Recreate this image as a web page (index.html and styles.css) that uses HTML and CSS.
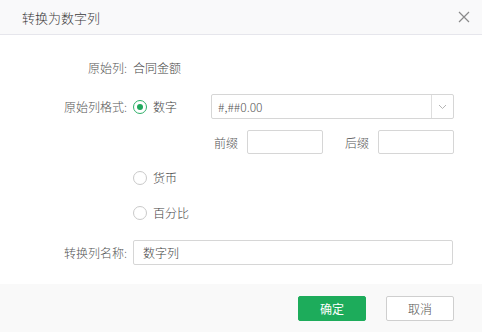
FILE: index.html
```html
<!DOCTYPE html>
<html lang="zh">
<head>
<meta charset="utf-8">
<title>转换为数字列</title>
<link rel="stylesheet" href="styles.css">
</head>
<body>
<div class="dialog">
  <div class="header">
    <span class="title">转换为数字列</span>
    <svg class="close" width="12" height="12" viewBox="0 0 12 12"><path d="M1 1L11 11M11 1L1 11" stroke="#8a8a8a" stroke-width="1.2" fill="none"/></svg>
  </div>
  <div class="body">
    <div class="row r1">
      <div class="label">原始列:</div>
      <div class="value">合同金额</div>
    </div>
    <div class="row r2">
      <div class="label">原始列格式:</div>
      <div class="opts">
        <div class="opt-line">
          <div class="radio-item"><span class="radio checked"></span><span>数字</span></div>
          <div class="select">
            <span class="select-text">#,##0.00</span>
            <span class="select-arrow"><svg width="9" height="6" viewBox="0 0 9 6"><path d="M1 1L4.5 4.5L8 1" stroke="#b5b5b5" stroke-width="1" fill="none"/></svg></span>
          </div>
        </div>
        <div class="affix-line">
          <span class="affix-label">前缀</span>
          <span class="input small"></span>
          <span class="affix-label second">后缀</span>
          <span class="input small"></span>
        </div>
        <div class="radio-item solo r-cur"><span class="radio"></span><span>货币</span></div>
        <div class="radio-item solo r-pct"><span class="radio"></span><span>百分比</span></div>
      </div>
    </div>
    <div class="row r3">
      <div class="label">转换列名称:</div>
      <div class="input wide"><span>数字列</span></div>
    </div>
  </div>
  <div class="footer">
    <button class="btn primary">确定</button>
    <button class="btn">取消</button>
  </div>
</div>
</body>
</html>
```
FILE: styles.css
```css
* { box-sizing: border-box; }
html, body { margin: 0; padding: 0; }
body {
  width: 482px;
  height: 332px;
  background: #fff;
  font-family: "Noto Sans CJK SC", "Noto Sans", "Liberation Sans", sans-serif;
  font-size: 12px;
  font-weight: 300;
  color: #444;
  overflow: hidden;
}
.dialog {
  width: 482px;
  height: 332px;
  display: flex;
  flex-direction: column;
}
.header {
  height: 35px;
  flex: none;
  background: #f9f9fa;
  border-bottom: 1px solid #e6e6ec;
  display: flex;
  align-items: center;
  justify-content: space-between;
  padding: 0 12px 0 22px;
}
.title {
  font-size: 13px;
  color: #3a3a3a;
  line-height: 1;
}
.close { display: block; }
.body {
  flex: 1;
  padding: 20px 29px 0 0;
}
.row {
  display: grid;
  grid-template-columns: 127px 1fr;
  column-gap: 6px;
  align-items: start;
}
.label {
  text-align: right;
  color: #555;
  height: 25px;
  line-height: 25px;
}
.value {
  height: 25px;
  line-height: 25px;
  color: #444;
}
.r2 { margin-top: 14px; }
.opts {
  display: flex;
  flex-direction: column;
}
.opt-line {
  display: flex;
  height: 25px;
}
.radio-item {
  display: flex;
  align-items: center;
  height: 25px;
  width: 78px;
  flex: none;
  color: #444;
}
.radio {
  width: 14px;
  height: 14px;
  border: 1px solid #c9c9c9;
  border-radius: 50%;
  margin-right: 6px;
  flex: none;
  display: flex;
  align-items: center;
  justify-content: center;
}
.radio.checked { border-color: #2fb069; }
.radio.checked::after {
  content: "";
  width: 6px;
  height: 6px;
  border-radius: 50%;
  background: #1fa85c;
}
.select {
  flex: 1;
  height: 25px;
  border: 1px solid #d6d6d6;
  border-radius: 2px;
  display: flex;
  align-items: center;
}
.select-text {
  flex: 1;
  padding-left: 6px;
  color: #555;
}
.select-arrow {
  width: 22px;
  height: 23px;
  border-left: 1px solid #dedede;
  display: flex;
  align-items: center;
  justify-content: center;
}
.select-arrow svg { display: block; }
.affix-line {
  display: flex;
  align-items: center;
  height: 24px;
  margin-top: 11px;
  padding-left: 81px;
}
.affix-label {
  color: #555;
  width: 33px;
  flex: none;
}
.affix-label.second { margin-left: 22px; }
.input {
  border: 1px solid #d6d6d6;
  border-radius: 2px;
  background: #fff;
}
.input.small {
  width: 76px;
  height: 24px;
  flex: none;
}
.r-cur { margin-top: 11px; }
.r-pct { margin-top: 10px; }
.r3 { margin-top: 15px; }
.input.wide {
  height: 25px;
  display: flex;
  align-items: center;
  padding-left: 9px;
  color: #444;
}
.footer {
  height: 48px;
  flex: none;
  background: #f9f9f9;
  display: flex;
  justify-content: flex-end;
  align-items: flex-start;
  gap: 20px;
  padding: 12px 28px 0 0;
}
.btn {
  width: 68px;
  height: 25px;
  border: 1px solid #cfcfcf;
  border-radius: 2px;
  background: #fff;
  color: #555;
  font-family: inherit;
  font-size: 12px;
  font-weight: 300;
  padding: 0;
}
.btn.primary {
  background: #1dac5b;
  border-color: #1dac5b;
  color: #fff;
  font-weight: 400;
}
```
